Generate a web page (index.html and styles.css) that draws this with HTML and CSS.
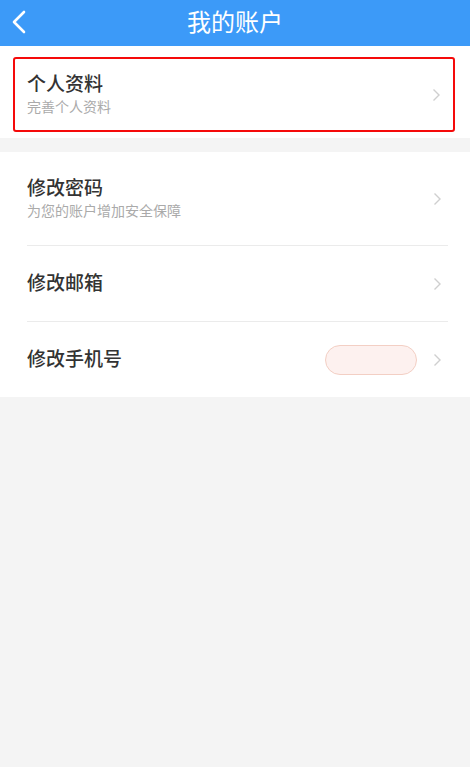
FILE: index.html
```html
<!DOCTYPE html>
<html lang="zh-CN">

<head>
    <meta charset="UTF-8">
    <meta name="viewport" content="width=device-width, initial-scale=1.0">
    <link rel="stylesheet" href="styles.css">
</head>

<body>
    <div class="header">
        <span class="back">
            <svg width="16" height="24" viewBox="0 0 16 24"><path d="M13 2 L3 12 L13 22" fill="none" stroke="#fff" stroke-width="2.6" stroke-linecap="round" stroke-linejoin="round"/></svg>
        </span>
        <h1>我的账户</h1>
    </div>

    <div class="section first">
        <div class="item highlight">
            <div class="text">
                <h4>个人资料</h4>
                <p>完善个人资料</p>
            </div>
            <span class="arrow"><svg width="9" height="14" viewBox="0 0 9 14"><path d="M1.5 1.5 L7 7 L1.5 12.5" fill="none" stroke="#cfcfcf" stroke-width="1.4"/></svg></span>
        </div>
    </div>

    <div class="section">
        <div class="row tall">
            <div class="text">
                <h4>修改密码</h4>
                <p>为您的账户增加安全保障</p>
            </div>
            <span class="arrow"><svg width="9" height="14" viewBox="0 0 9 14"><path d="M1.5 1.5 L7 7 L1.5 12.5" fill="none" stroke="#cfcfcf" stroke-width="1.4"/></svg></span>
        </div>
        <div class="row">
            <div class="text">
                <h4>修改邮箱</h4>
            </div>
            <span class="arrow"><svg width="9" height="14" viewBox="0 0 9 14"><path d="M1.5 1.5 L7 7 L1.5 12.5" fill="none" stroke="#cfcfcf" stroke-width="1.4"/></svg></span>
        </div>
        <div class="row last">
            <div class="text">
                <h4>修改手机号</h4>
            </div>
            <span class="pill"></span>
            <span class="arrow"><svg width="9" height="14" viewBox="0 0 9 14"><path d="M1.5 1.5 L7 7 L1.5 12.5" fill="none" stroke="#cfcfcf" stroke-width="1.4"/></svg></span>
        </div>
    </div>
</body>

</html>
```

FILE: styles.css
```css
body {
    font-family: "Noto Sans CJK SC", "Noto Sans", sans-serif;
    background-color: #f4f4f4;
    margin: 0;
    padding: 0;
    height: 767px;
}

.header {
    height: 46px;
    background-color: #3c9af8;
    display: flex;
    align-items: center;
    justify-content: center;
    position: relative;
}

.header h1 {
    margin: 0;
    padding-bottom: 5px;
    color: #ffffff;
    font-size: 24px;
    font-weight: normal;
    line-height: 36px;
}

.back {
    position: absolute;
    left: 11px;
    top: 10px;
    height: 24px;
}

.section {
    background-color: #ffffff;
    margin-bottom: 14px;
}

.section.first {
    padding: 11px 15px 6px 13px;
}

.item {
    display: flex;
    align-items: center;
    height: 71px;
    padding: 0 12px 0 12px;
}

.highlight {
    border: 2px solid #f50a0a;
    border-radius: 3px;
}

.text {
    flex: 1;
    padding-bottom: 4px;
}

h4 {
    margin: 0;
    font-size: 19px;
    font-weight: 500;
    color: #333333;
    line-height: 24px;
}

p {
    margin: 2px 0 0;
    font-size: 14px;
    color: #aaaaaa;
    line-height: 18px;
}

.arrow {
    display: flex;
    width: 9px;
}

.row {
    display: flex;
    align-items: center;
    height: 75px;
    margin: 0 22px 0 27px;
    border-bottom: 1px solid #ebebeb;
    padding-right: 6px;
}

.row.tall {
    height: 93px;
}

.row.last {
    border-bottom: none;
}

.pill {
    width: 90px;
    height: 28px;
    border: 1.5px solid #f3cfc4;
    border-radius: 15px;
    background-color: #fdf1ef;
    margin-right: 16px;
}
```
